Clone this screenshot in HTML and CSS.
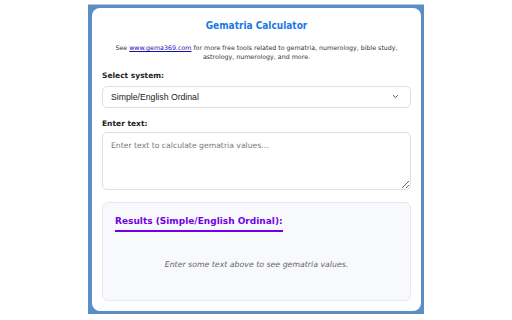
FILE: index.html
```
<!DOCTYPE html>
<html lang="en">
<head>
    <meta charset="UTF-8">
    <meta name="viewport" content="width=device-width, initial-scale=1.0">
    <title>Gematria Calculator</title>
    <link rel="stylesheet" href="styles.css">
</head>
<body>
    <div class="frame">
        <div class="container">
            <h1 class="header">Gematria Calculator</h1>
            <p class="intro">See <a href="#">www.gema369.com</a> for more free tools related to gematria, numerology, bible study, astrology, numerology, and more.</p>

            <label class="label" for="system">Select system:</label>
            <div class="select-wrap">
                <select id="system" class="select-field">
                    <option>Simple/English Ordinal</option>
                    <option>Hebrew</option>
                    <option>Reverse Ordinal</option>
                </select>
                <svg class="chevron" width="7" height="5" viewBox="0 0 7 5"><path d="M1 1.2 L3.5 3.6 L6 1.2" fill="none" stroke="#555" stroke-width="1"/></svg>
            </div>

            <label class="label label-text" for="text">Enter text:</label>
            <textarea id="text" class="text-field" placeholder="Enter text to calculate gematria values..."></textarea>

            <div class="results">
                <div class="results-header">Results (Simple/English Ordinal):</div>
                <p class="empty">Enter some text above to see gematria values.</p>
            </div>
        </div>
    </div>
</body>
</html>
```

FILE: styles.css
```
body {
    font-family: 'DejaVu Sans', Verdana, sans-serif;
    background-color: #fff;
    margin: 0;
}
.frame {
    width: 336px;
    height: 310px;
    margin: 4px auto 0;
    padding: 3px 3px 3px 4px;
    box-sizing: border-box;
    background: #5b8ec9;
    border-top: 1px solid #b9c9dc;
}
.container {
    background: #fff;
    border-radius: 8px;
    height: 100%;
    padding: 10px;
    box-sizing: border-box;
    display: flex;
    flex-direction: column;
}
.header {
    margin: 0 0 9px;
    font-family: 'DejaVu Sans Condensed', 'DejaVu Sans', sans-serif;
    font-size: 10px;
    line-height: 16px;
    text-align: center;
    color: #1a77e8;
}
.intro {
    margin: 0 0 9px;
    font-size: 6.3px;
    line-height: 9px;
    text-align: center;
    color: #333;
}
.intro a {
    color: #1a0dab;
}
.label {
    display: block;
    font-size: 7.5px;
    line-height: 11px;
    font-weight: bold;
    color: #222;
    margin-bottom: 4px;
}
.label-text {
    margin-bottom: 3px;
}
.select-wrap {
    position: relative;
    margin-bottom: 10px;
}
.select-field {
    width: 100%;
    height: 22px;
    padding: 0 8px;
    border: 1px solid #dcdfe4;
    border-radius: 5px;
    background: #fff;
    font-family: 'Liberation Sans', Arial, sans-serif;
    font-size: 8.7px;
    color: #222;
    appearance: none;
    -webkit-appearance: none;
    box-sizing: border-box;
}
.chevron {
    position: absolute;
    right: 12px;
    top: 9px;
}
.text-field {
    display: block;
    width: 100%;
    height: 58px;
    padding: 8px;
    border: 1px solid #dcdfe4;
    border-radius: 5px;
    font-family: 'DejaVu Sans', Verdana, sans-serif;
    font-size: 7.7px;
    line-height: 10px;
    box-sizing: border-box;
    resize: vertical;
    margin: 0 0 12px;
}
.text-field::placeholder {
    color: #777;
}
.results {
    flex: 1;
    background: #f7f9fc;
    border: 1px solid #e6e9ef;
    border-radius: 6px;
    padding: 6px 12px;
}
.results-header {
    display: inline-block;
    font-size: 9px;
    line-height: 13px;
    font-weight: bold;
    color: #7200e6;
    padding-bottom: 2px;
    border-bottom: 2px solid #7200e6;
}
.empty {
    margin: 28px 0 0;
    text-align: center;
    font-style: italic;
    font-size: 7.8px;
    color: #666;
}
```
